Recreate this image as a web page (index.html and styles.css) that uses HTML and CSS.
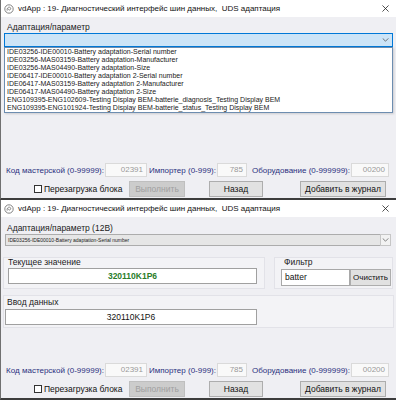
FILE: index.html
```html
<!DOCTYPE html>
<html lang="ru">
<head>
    <meta charset="UTF-8">
    <title>vdApp UDS</title>
    <link rel="stylesheet" href="styles.css">
</head>
<body>
    <!-- window 1: dropdown open -->
    <div class="window">
        <div class="titlebar">
            <svg class="app-icon" viewBox="0 0 10 10"><circle cx="5" cy="5" r="4.2" fill="none" stroke="#777" stroke-width="0.9"/><path d="M3.2 6.6 C2.6 4.6 4 2.9 5.6 3.2 C7 3.5 7.2 5.4 5.8 5.9 C4.9 6.2 4.2 5.5 4.5 4.8" fill="none" stroke="#777" stroke-width="0.9"/></svg>
            <span class="title">vdApp : 19- Диагностический интерфейс шин данных,  UDS адаптация</span>
            <svg class="close" viewBox="0 0 8 8"><path d="M0.5 0.5 L7.5 7.5 M7.5 0.5 L0.5 7.5" stroke="#222" stroke-width="0.9"/></svg>
        </div>
        <div class="body">
            <div class="field-label">Адаптация/параметр</div>
            <div class="combo combo-open">
                <span class="combo-text"></span>
                <svg class="chevron" viewBox="0 0 8 5"><path d="M0.5 0.5 L4 4 L7.5 0.5" fill="none" stroke="#444" stroke-width="0.9"/></svg>
            </div>
            <ul class="droplist">
                <li>IDE03256-IDE00010-Battery adaptation-Serial number</li>
                <li>IDE03256-MAS03159-Battery adaptation-Manufacturer</li>
                <li>IDE03256-MAS04490-Battery adaptation-Size</li>
                <li>IDE06417-IDE00010-Battery adaptation 2-Serial number</li>
                <li>IDE06417-MAS03159-Battery adaptation 2-Manufacturer</li>
                <li>IDE06417-MAS04490-Battery adaptation 2-Size</li>
                <li>ENG109395-ENG102609-Testing Display BEM-batterie_diagnosis_Testing Display BEM</li>
                <li>ENG109395-ENG101924-Testing Display BEM-batterie_status_Testing Display BEM</li>
            </ul>
            <div class="footer">
                <div class="codes-row">
                    <span class="code-label lbl-workshop">Код мастерской (0-99999):</span>
                    <span class="code-box box-workshop">02391</span>
                    <span class="code-label lbl-importer">Импортер (0-999):</span>
                    <span class="code-box box-importer">785</span>
                    <span class="code-label lbl-equip">Оборудование (0-999999):</span>
                    <span class="code-box box-equip">00200</span>
                </div>
                <div class="actions-row">
                    <label class="check"><span class="check-box"></span>Перезагрузка блока</label>
                    <button class="btn btn-run" disabled>Выполнить</button>
                    <button class="btn btn-back">Назад</button>
                    <button class="btn btn-log">Добавить в журнал</button>
                </div>
            </div>
        </div>
    </div>

    <!-- window 2: parameter selected -->
    <div class="window">
        <div class="titlebar">
            <svg class="app-icon" viewBox="0 0 10 10"><circle cx="5" cy="5" r="4.2" fill="none" stroke="#777" stroke-width="0.9"/><path d="M3.2 6.6 C2.6 4.6 4 2.9 5.6 3.2 C7 3.5 7.2 5.4 5.8 5.9 C4.9 6.2 4.2 5.5 4.5 4.8" fill="none" stroke="#777" stroke-width="0.9"/></svg>
            <span class="title">vdApp : 19- Диагностический интерфейс шин данных,  UDS адаптация</span>
            <svg class="close" viewBox="0 0 8 8"><path d="M0.5 0.5 L7.5 7.5 M7.5 0.5 L0.5 7.5" stroke="#222" stroke-width="0.9"/></svg>
        </div>
        <div class="body">
            <div class="field-label label-second">Адаптация/параметр (12В)</div>
            <div class="combo combo-closed">
                <span class="combo-text">IDE03256-IDE00010-Battery adaptation-Serial number</span>
                <span class="combo-btn">
                    <svg class="chevron" viewBox="0 0 8 5"><path d="M0.5 0.5 L4 4 L7.5 0.5" fill="none" stroke="#555" stroke-width="0.9"/></svg>
                </span>
            </div>
            <div class="panels">
                <div class="panel panel-current">
                    <div class="panel-title">Текущее значение</div>
                    <div class="value-box current-value">320110K1P6</div>
                </div>
                <div class="panel panel-filter">
                    <div class="panel-title">Фильтр</div>
                    <div class="filter-row">
                        <span class="filter-input">batter</span>
                        <button class="btn btn-clear">Очистить</button>
                    </div>
                </div>
            </div>
            <div class="panel panel-input">
                <div class="panel-title">Ввод данных</div>
                <div class="value-box input-value">320110K1P6</div>
            </div>
            <div class="footer">
                <div class="codes-row">
                    <span class="code-label lbl-workshop">Код мастерской (0-99999):</span>
                    <span class="code-box box-workshop">02391</span>
                    <span class="code-label lbl-importer">Импортер (0-999):</span>
                    <span class="code-box box-importer">785</span>
                    <span class="code-label lbl-equip">Оборудование (0-999999):</span>
                    <span class="code-box box-equip">00200</span>
                </div>
                <div class="actions-row">
                    <label class="check"><span class="check-box"></span>Перезагрузка блока</label>
                    <button class="btn btn-run" disabled>Выполнить</button>
                    <button class="btn btn-back">Назад</button>
                    <button class="btn btn-log">Добавить в журнал</button>
                </div>
            </div>
        </div>
    </div>
</body>
</html>
```

FILE: styles.css
```css
* {
    margin: 0;
    padding: 0;
    box-sizing: border-box;
}

body {
    width: 396px;
    height: 400px;
    overflow: hidden;
    font-family: 'Liberation Sans', Arial, sans-serif;
    background: #eeeef2;
    color: #111;
}

.window {
    position: relative;
    height: 200px;
    display: flex;
    flex-direction: column;
    background: #efeff3;
    border-left: 1px solid #707070;
    border-bottom: 2px solid #3c3c3c;
}

.titlebar {
    height: 17px;
    display: flex;
    align-items: center;
    padding: 0 4px 0 3px;
    background: #fff;
    font-size: 8px;
}

.app-icon {
    width: 10px;
    height: 10px;
    margin-right: 4px;
}

.title {
    flex: 1;
    white-space: pre;
}

.close {
    width: 7px;
    height: 7px;
    margin-right: 3px;
}

.body {
    position: relative;
    flex: 1;
    display: flex;
    flex-direction: column;
    padding: 5px 3px 1px 3px;
}

.field-label {
    font-size: 8.5px;
    line-height: 10px;
    padding-left: 3px;
    color: #1a1a1a;
}

.combo {
    display: flex;
    align-items: center;
    height: 14px;
    margin-top: 1px;
}

.combo-open {
    background: #cce4f7;
    border: 1px solid #0078d7;
    justify-content: flex-end;
    padding-right: 3px;
}

.chevron {
    width: 7px;
    height: 4px;
}

.droplist {
    position: absolute;
    top: 30px;
    left: 3px;
    width: 389px;
    height: 66px;
    list-style: none;
    background: #fff;
    border: 1px solid #6d8db0;
    box-shadow: 1px 1px 2px rgba(0, 0, 0, 0.15);
    padding: 0 2px;
    font-size: 7px;
    line-height: 8px;
    color: #1a1a1a;
    white-space: nowrap;
}

/* second window */
.label-second {
    margin-top: 1px;
}

.combo-closed {
    height: 12px;
    margin: 1px 2px 0 1px;
    background: #e6e6e6;
    border: 1px solid #acacac;
}

.combo-closed .combo-text {
    flex: 1;
    font-size: 5px;
    padding-left: 2px;
    color: #222;
    white-space: nowrap;
}

.combo-btn {
    width: 11px;
    height: 12px;
    margin: -1px -1px -1px 0;
    display: flex;
    align-items: center;
    justify-content: center;
    background: #f2f2f2;
    border: 1px solid #c6c6c6;
}

.panels {
    display: flex;
    gap: 9px;
    margin-top: 11px;
}

.panel {
    background: #f3f3f6;
    border: 1px solid #e2e2e8;
}

.panel-title {
    font-size: 8.5px;
    line-height: 9px;
    color: #1a1a1a;
}

.panel-current {
    width: 262px;
    height: 32px;
    margin-left: -1px;
    padding: 0 0 0 4px;
}

.panel-filter {
    width: 119px;
    height: 32px;
    padding: 0 0 0 6px;
}

.panel-filter .panel-title {
    padding-left: 3px;
}

.value-box {
    height: 16px;
    background: #fff;
    border: 1px solid #a0a0a0;
    text-align: center;
    font-size: 8.5px;
    line-height: 14px;
}

.current-value {
    width: 249px;
    margin-top: 1px;
    font-weight: bold;
    color: #2a7d2a;
}

.filter-row {
    display: flex;
    margin-top: 2px;
}

.filter-input {
    width: 69px;
    height: 17px;
    background: #fff;
    border: 1px solid #a8a8a8;
    font-size: 8.5px;
    line-height: 15px;
    padding-left: 3px;
}

.btn {
    font-family: 'Liberation Sans', Arial, sans-serif;
    font-size: 8.5px;
    color: #111;
    background: #e1e1e1;
    border: 1px solid #adadad;
    height: 16px;
}

.btn-clear {
    width: 41px;
    height: 17px;
    font-size: 8px;
}

.panel-input {
    height: 33px;
    margin: 6px 0 0 -1px;
    width: 391px;
    padding: 2px 0 0 3px;
}

.input-value {
    width: 252px;
    margin-top: 2px;
    margin-left: -2px;
}

/* footer codes and buttons */
.footer {
    margin-top: auto;
    display: flex;
    flex-direction: column;
    gap: 4px;
}

.codes-row {
    display: flex;
    align-items: center;
    height: 14px;
}

.code-label {
    flex-shrink: 0;
    font-size: 8px;
    color: #2b2f7e;
    white-space: nowrap;
    text-align: right;
    padding-right: 1px;
}

.lbl-workshop {
    width: 101px;
}

.lbl-importer {
    width: 70px;
}

.lbl-equip {
    width: 104px;
}

.code-box {
    flex-shrink: 0;
    height: 14px;
    background: #f9f9f9;
    border: 1px solid #dadada;
    color: #9a9a9a;
    font-size: 8px;
    line-height: 12px;
    text-align: right;
    padding-right: 3px;
}

.box-workshop {
    width: 42px;
}

.box-importer {
    width: 30px;
}

.box-equip {
    width: 38px;
}

.actions-row {
    display: flex;
    align-items: center;
    height: 16px;
}

.check {
    display: flex;
    align-items: center;
    font-size: 8.5px;
    margin-left: 30px;
    width: 95px;
}

.check-box {
    width: 8px;
    height: 8px;
    background: #fff;
    border: 1px solid #333;
    margin-right: 2px;
}

.btn-run {
    width: 56px;
    background: #cccccc;
    border-color: #bfbfbf;
    color: #a0a0a0;
}

.btn-back {
    width: 54px;
    margin-left: 24px;
}

.btn-log {
    width: 86px;
    margin-left: 37px;
}
```
